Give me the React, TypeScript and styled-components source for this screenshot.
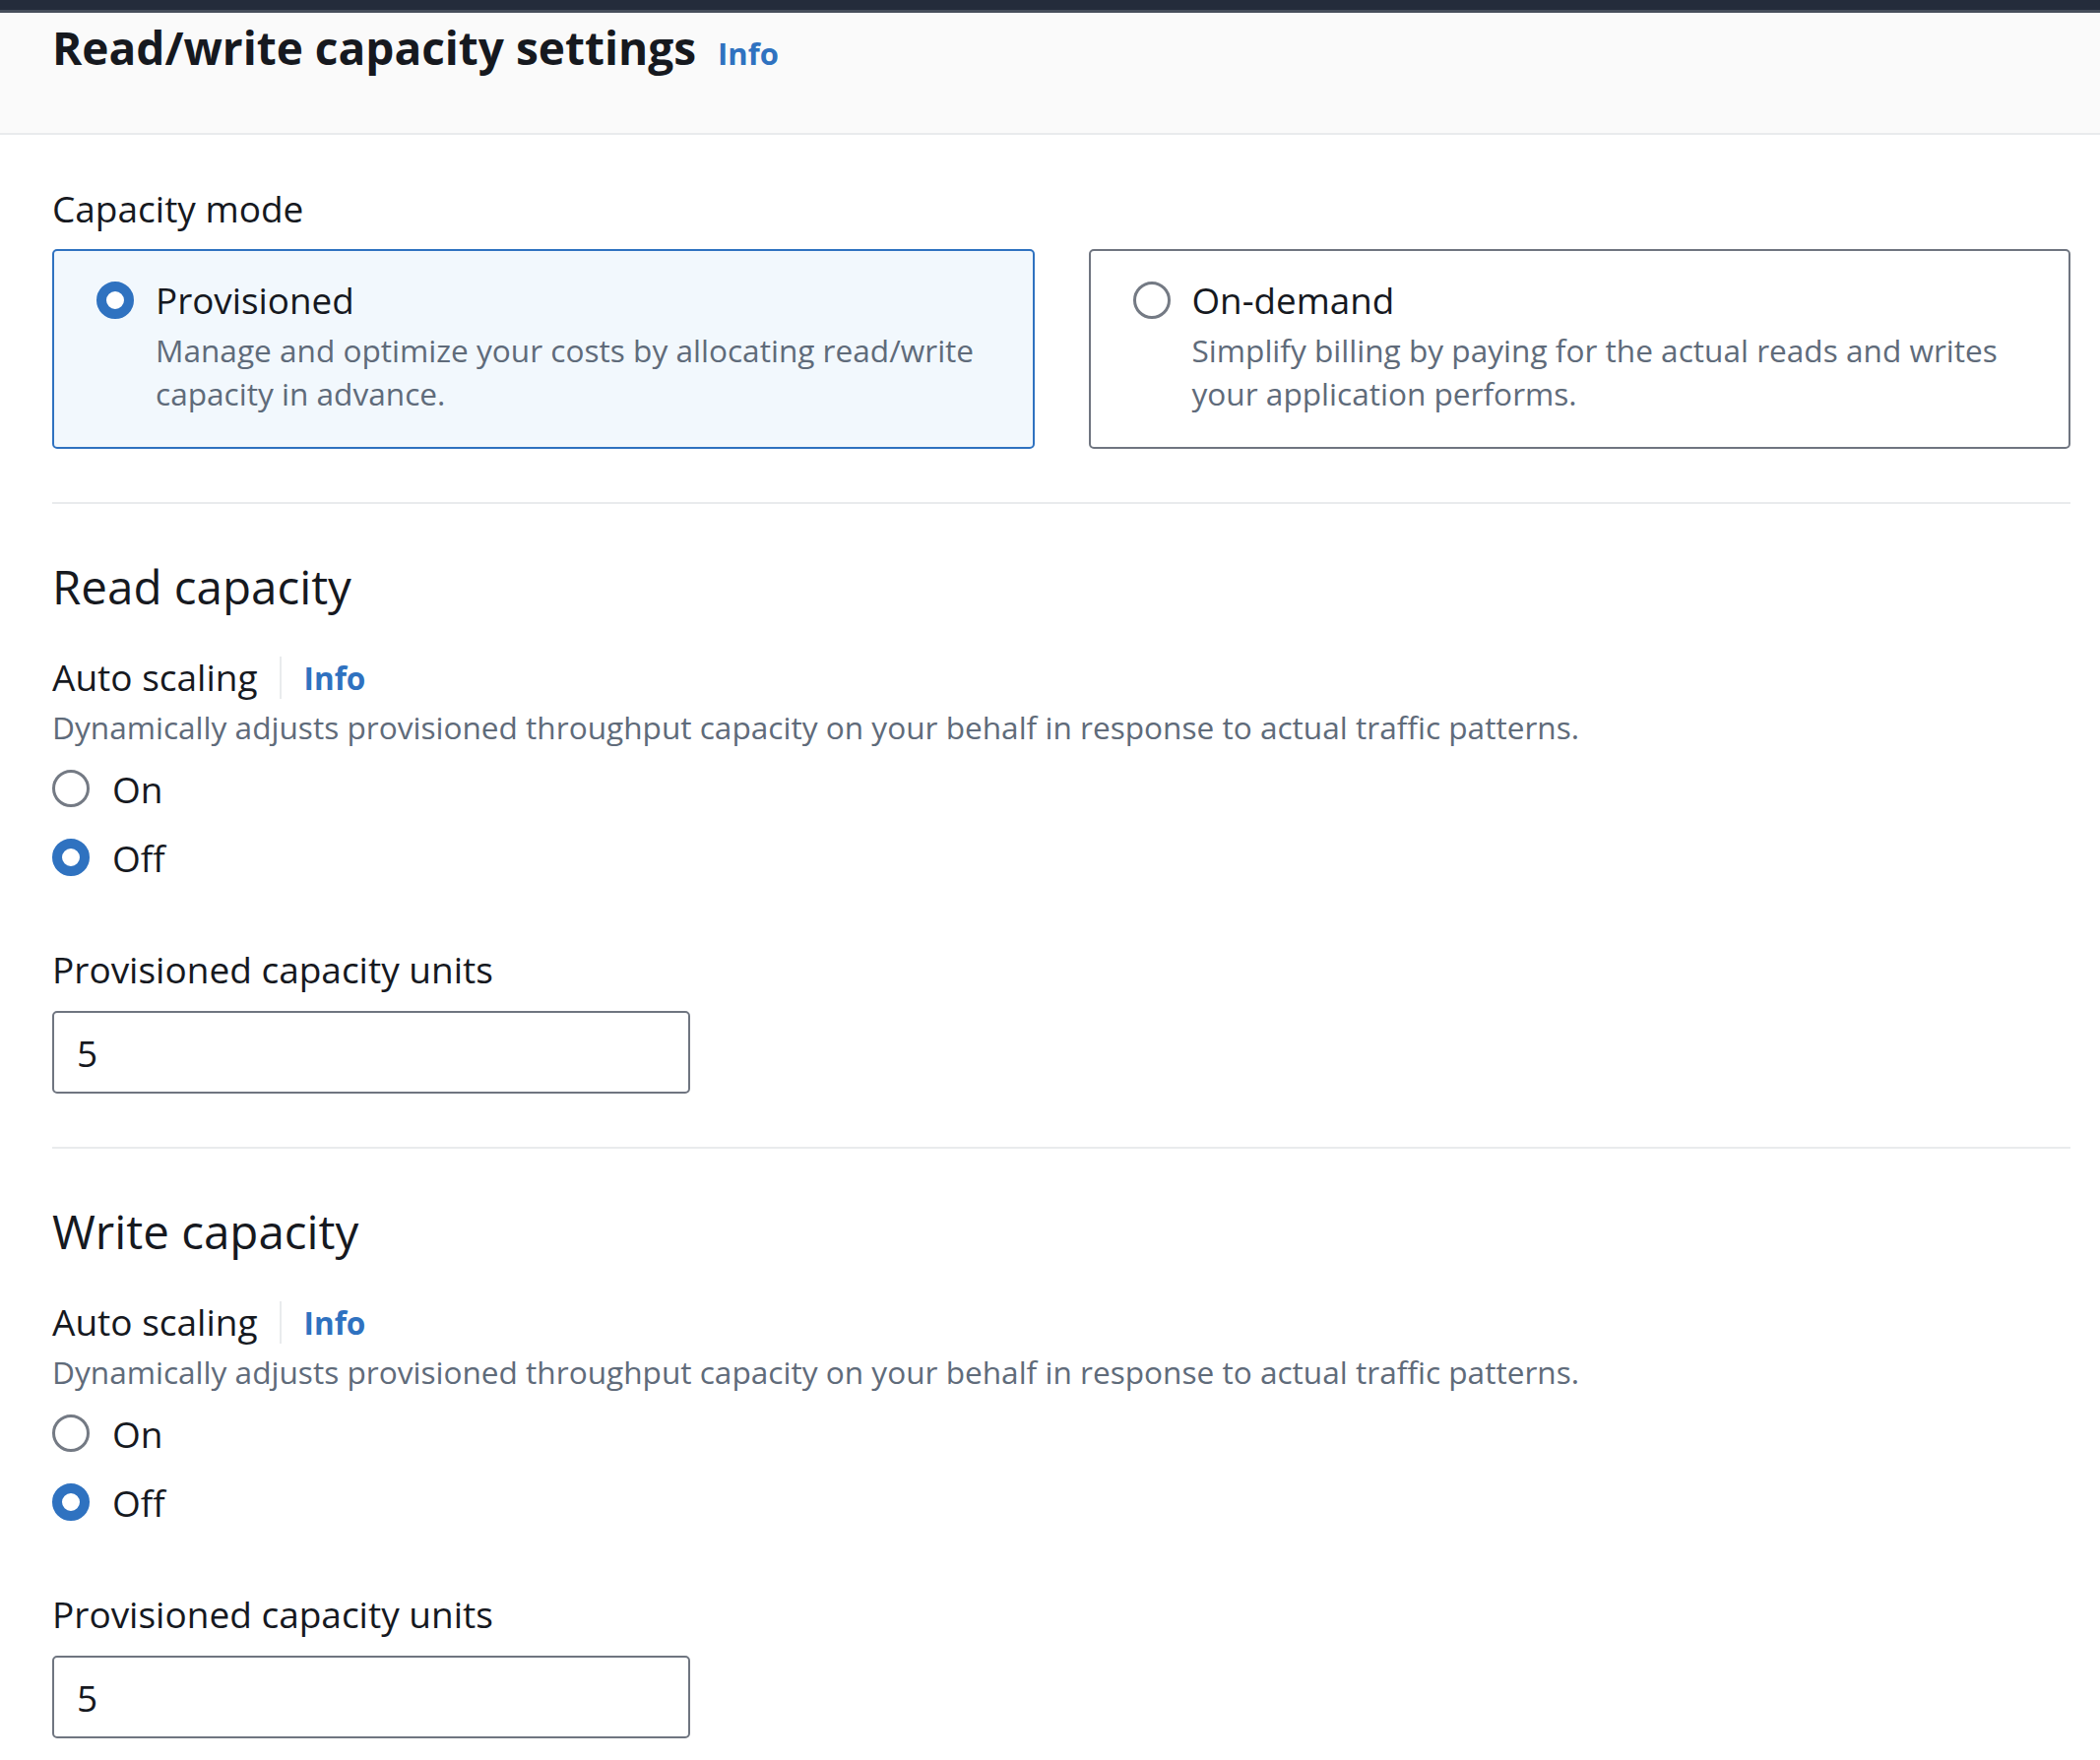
import React from "react";
import styled, { createGlobalStyle } from "styled-components";

const Global = createGlobalStyle`
  html, body { margin: 0; padding: 0; background: #ffffff; }
  body { font-family: "Open Sans", "Noto Sans", sans-serif; color: #16191f; }
  * { box-sizing: border-box; }
`;

const TopBar = styled.div`
  height: 13px;
  background: #242c3b;
  border-bottom: 3px solid #464e5b;
`;

const Header = styled.header`
  background: #fafafa;
  border-bottom: 2px solid #e9ebed;
  height: 124px;
  padding: 6px 30px 0 53px;
  display: flex;
  align-items: baseline;
  gap: 22px;
`;

const Title = styled.h1`
  margin: 0;
  font-size: 46px;
  line-height: 58px;
  font-weight: 700;
  color: #16191f;
`;

const InfoLink = styled.a<{ $size?: number }>`
  color: #2f72c0;
  font-weight: 700;
  font-size: ${(p) => p.$size ?? 31.5}px;
  text-decoration: none;
`;

const Body = styled.main`
  padding: 53px 30px 0 53px;
`;

const FieldLabel = styled.div`
  font-size: 37px;
  line-height: 44px;
  color: #16191f;
`;

const TileGrid = styled.div`
  margin-top: 19px;
  display: grid;
  grid-template-columns: 1fr 1fr;
  gap: 55px;
`;

const Tile = styled.div<{ $selected?: boolean }>`
  border: 2px solid ${(p) => (p.$selected ? "#2f72c0" : "#6f7580")};
  background: ${(p) => (p.$selected ? "#f2f8fd" : "#ffffff")};
  border-radius: 5px;
  padding: 28px 40px 32px 43px;
  display: flex;
  gap: 22px;
  align-items: flex-start;
`;

const Radio = styled.span<{ $checked?: boolean }>`
  flex: none;
  width: 38px;
  height: 38px;
  border-radius: 50%;
  background: #ffffff;
  border: ${(p) => (p.$checked ? "10px solid #2f72c0" : "3px solid #747a84")};
  margin-top: 3px;
`;

const RowRadio = styled(Radio)`
  margin-top: 0;
`;

const TileText = styled.div`
  display: flex;
  flex-direction: column;
  gap: 7px;
`;

const TileLabel = styled.div`
  font-size: 36.8px;
  line-height: 44px;
  color: #16191f;
`;

const Desc = styled.div`
  font-size: 31.6px;
  line-height: 44px;
  color: #5f6b7a;
`;

const Divider = styled.hr`
  margin: 54px 0 0 0;
  border: none;
  height: 2px;
  background: #e9ebed;
`;

const Section = styled.section`
  padding-top: 58px;
`;

const SectionTitle = styled.h2`
  margin: 0;
  font-size: 47.5px;
  line-height: 52px;
  font-weight: 400;
  color: #16191f;
`;

const AutoHead = styled.div`
  margin-top: 44px;
  display: flex;
  align-items: center;
`;

const AutoLabel = styled.span`
  font-size: 37px;
  line-height: 44px;
`;

const VSep = styled.span`
  width: 2px;
  height: 43px;
  background: #e9ebed;
  margin: 0 23px 0 22px;
`;

const AutoDesc = styled(Desc)`
  margin-top: 7px;
`;

const RadioList = styled.div`
  margin-top: 18px;
  display: flex;
  flex-direction: column;
  gap: 26px;
`;

const RadioRow = styled.label`
  display: flex;
  align-items: center;
  gap: 23px;
  height: 44px;
  font-size: 37px;
`;

const UnitsLabel = styled(FieldLabel)`
  margin-top: 70px;
`;

const Input = styled.div`
  margin-top: 20px;
  width: 648px;
  height: 84px;
  border: 2px solid #6f7580;
  border-radius: 5px;
  padding: 0 23px;
  display: flex;
  align-items: center;
  font-size: 37px;
  color: #16191f;
`;

const CapacitySection = ({ title }: { title: string }) => (
  <>
    <Divider />
    <Section>
      <SectionTitle>{title}</SectionTitle>
      <AutoHead>
        <AutoLabel>Auto scaling</AutoLabel>
        <VSep />
        <InfoLink href="#">Info</InfoLink>
      </AutoHead>
      <AutoDesc>
        Dynamically adjusts provisioned throughput capacity on your behalf in response to actual traffic patterns.
      </AutoDesc>
      <RadioList>
        <RadioRow>
          <RowRadio />
          On
        </RadioRow>
        <RadioRow>
          <RowRadio $checked />
          Off
        </RadioRow>
      </RadioList>
      <UnitsLabel>Provisioned capacity units</UnitsLabel>
      <Input>5</Input>
    </Section>
  </>
);

export default function App() {
  return (
    <>
      <Global />
      <TopBar />
      <Header>
        <Title>Read/write capacity settings</Title>
        <InfoLink href="#" $size={31}>
          Info
        </InfoLink>
      </Header>
      <Body>
        <FieldLabel>Capacity mode</FieldLabel>
        <TileGrid>
          <Tile $selected>
            <Radio $checked />
            <TileText>
              <TileLabel>Provisioned</TileLabel>
              <Desc>Manage and optimize your costs by allocating read/write capacity in advance.</Desc>
            </TileText>
          </Tile>
          <Tile>
            <Radio />
            <TileText>
              <TileLabel>On-demand</TileLabel>
              <Desc>Simplify billing by paying for the actual reads and writes your application performs.</Desc>
            </TileText>
          </Tile>
        </TileGrid>
        <CapacitySection title="Read capacity" />
        <CapacitySection title="Write capacity" />
      </Body>
    </>
  );
}
